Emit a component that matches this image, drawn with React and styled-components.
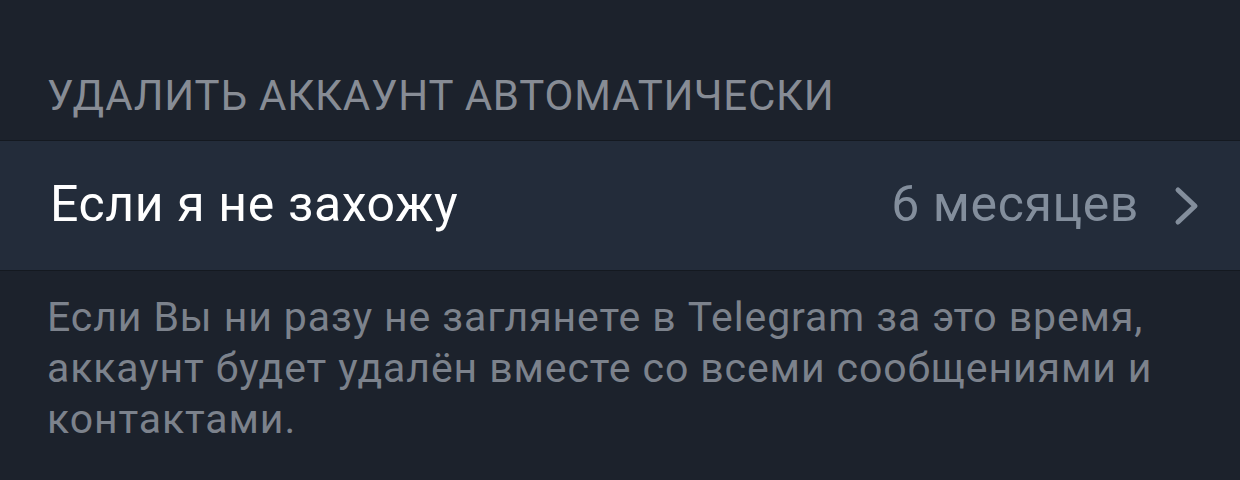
import React from 'react'
import styled, { createGlobalStyle } from 'styled-components'

const GlobalStyle = createGlobalStyle`
  html, body {
    margin: 0;
    padding: 0;
    background: #1c222c;
  }

  body {
    font-family: Roboto, "Noto Sans", sans-serif;
    -webkit-font-smoothing: antialiased;
  }
`

const Screen = styled.div`
  width: 1240px;
  height: 480px;
  overflow: hidden;
  background: #1c222c;
`

const SectionHeader = styled.div`
  box-sizing: border-box;
  height: 140px;
  padding: 71px 47px 0;
  font-size: 42px;
  line-height: 50px;
  letter-spacing: 0.8px;
  color: #878c95;
  text-transform: uppercase;
  white-space: nowrap;
`

const Cell = styled.div`
  box-sizing: border-box;
  display: flex;
  align-items: center;
  justify-content: space-between;
  height: 131px;
  padding: 0 41px 4px 50px;
  background: #232c3a;
  border-top: 1px solid #141920;
  border-bottom: 1px solid #141920;
`

const Title = styled.span`
  font-size: 50px;
  letter-spacing: 0.6px;
  color: #ffffff;
`

const Accessory = styled.div`
  display: flex;
  align-items: center;
  gap: 35px;
  margin-top: 4px;
`

const Value = styled.span`
  font-size: 50px;
  letter-spacing: 0.6px;
  color: #838e9c;
  margin-top: -4px;
`

const Chevron = () => (
  <svg width="25" height="40" viewBox="0 0 25 40">
    <path
      d="M4 4 L21 20 L4 36"
      fill="none"
      stroke="#838e9c"
      strokeWidth="5"
      strokeLinecap="round"
      strokeLinejoin="round"
    />
  </svg>
)

const Footer = styled.p`
  margin: 0;
  padding: 21px 47px 0;
  font-size: 41px;
  line-height: 51px;
  letter-spacing: 0.9px;
  color: #7c828c;
`

const App = () => (
  <Screen>
    <GlobalStyle />
    <SectionHeader>Удалить аккаунт автоматически</SectionHeader>
    <Cell>
      <Title>Если я не захожу</Title>
      <Accessory>
        <Value>6 месяцев</Value>
        <Chevron />
      </Accessory>
    </Cell>
    <Footer>
      Если Вы ни разу не заглянете в Telegram за это время, аккаунт будет
      удалён вместе со всеми сообщениями и контактами.
    </Footer>
  </Screen>
)

export default App
